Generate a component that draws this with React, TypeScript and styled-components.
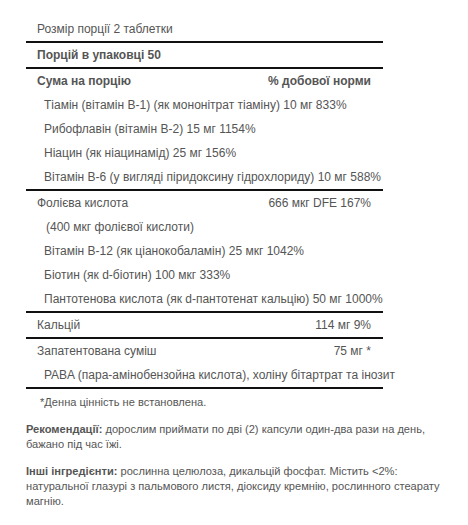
import styled, { createGlobalStyle } from "styled-components";

const Global = createGlobalStyle`
    body{
        margin: 0;
        background: #fff;
        font-family: "Liberation Sans", Arial, sans-serif;
        font-size: 12px;
        color: #555;
    }
`

const Wrapper = styled.div`
    padding: 17px 0 0 26px;
    width: 440px;
`

const Table = styled.div`
    width: 357px;
    display: flex;
    flex-direction: column;
`

const Group = styled.div<{ $line?: boolean }>`
    display: flex;
    flex-direction: column;
    border-bottom: ${p => (p.$line ? "2px solid #111" : "none")};
`

const Row = styled.div<{ $indent?: number; $bold?: boolean }>`
    height: 24px;
    display: flex;
    align-items: center;
    justify-content: space-between;
    padding: 0 12px 0 ${p => 11 + (p.$indent ?? 0)}px;
    font-weight: ${p => (p.$bold ? "bold" : "normal")};
    white-space: nowrap;
`

const Footnote = styled.p`
    margin: 6px 0 0 14px;
    font-size: 11.1px;
    line-height: 15px;
`

const Para = styled.p`
    margin: 12px 0 0;
    font-size: 11.1px;
    line-height: 15px;
    white-space: nowrap;
`

export default function App(){
    return(
        <Wrapper>
            <Global/>
            <Table>
                <Group $line>
                    <Row>Розмір порції 2 таблетки</Row>
                </Group>
                <Group $line>
                    <Row $bold>Порцій в упаковці 50</Row>
                </Group>
                <Group $line>
                    <Row $bold><span>Сума на порцію</span><span>% добової норми</span></Row>
                    <Row $indent={7}>Тіамін (вітамін B-1) (як мононітрат тіаміну) 10 мг 833%</Row>
                    <Row $indent={7}>Рибофлавін (вітамін B-2) 15 мг 1154%</Row>
                    <Row $indent={7}>Ніацин (як ніацинамід) 25 мг 156%</Row>
                    <Row $indent={7}>Вітамін B-6 (у вигляді піридоксину гідрохлориду) 10 мг 588%</Row>
                </Group>
                <Group $line>
                    <Row><span>Фолієва кислота</span><span>666 мкг DFE 167%</span></Row>
                    <Row $indent={9}>(400 мкг фолієвої кислоти)</Row>
                    <Row $indent={7}>Вітамін B-12 (як ціанокобаламін) 25 мкг 1042%</Row>
                    <Row $indent={7}>Біотин (як d-біотин) 100 мкг 333%</Row>
                    <Row $indent={7}>Пантотенова кислота (як d-пантотенат кальцію) 50 мг 1000%</Row>
                </Group>
                <Group $line>
                    <Row><span>Кальцій</span><span>114 мг 9%</span></Row>
                </Group>
                <Group $line>
                    <Row><span>Запатентована суміш</span><span>75 мг *</span></Row>
                    <Row $indent={7}>PABA (пара-амінобензойна кислота), холіну бітартрат та інозит</Row>
                </Group>
            </Table>
            <Footnote>*Денна цінність не встановлена.</Footnote>
            <Para>
                <b>Рекомендації:</b> дорослим приймати по дві (2) капсули один-два рази на день,<br/>
                бажано під час їжі.
            </Para>
            <Para>
                <b>Інші інгредієнти:</b> рослинна целюлоза, дикальцій фосфат. Містить &lt;2%:<br/>
                натуральної глазурі з пальмового листя, діоксиду кремнію, рослинного стеарату<br/>
                магнію.
            </Para>
        </Wrapper>
    )
}
